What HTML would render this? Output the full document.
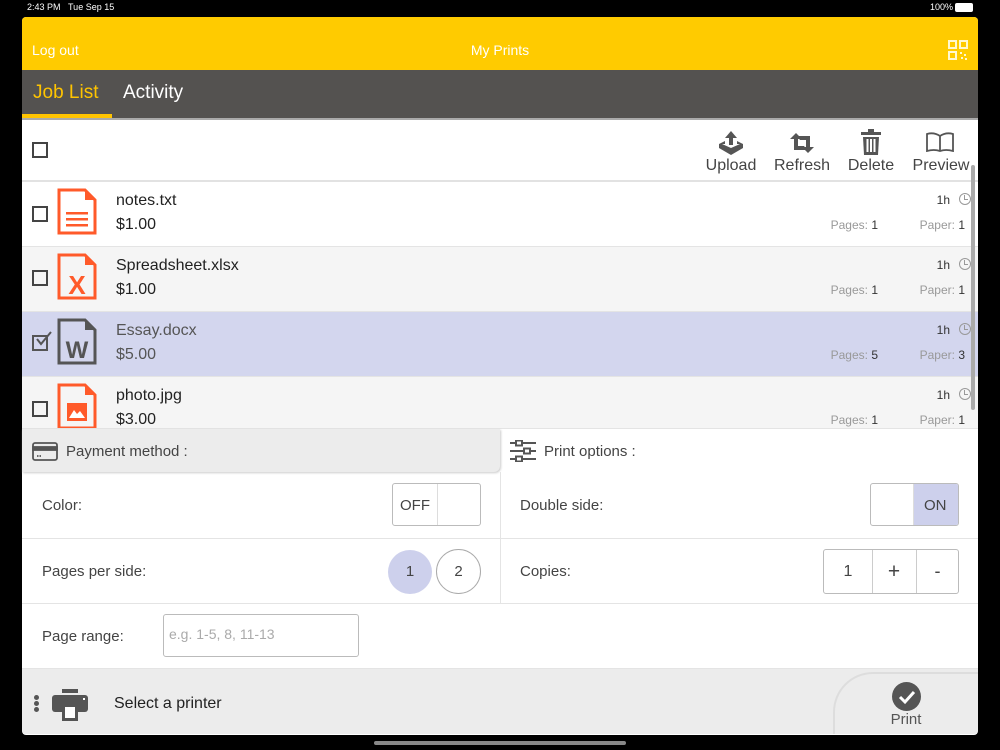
<!DOCTYPE html>
<html><head><meta charset="utf-8"><style>
*{margin:0;padding:0;box-sizing:border-box}
html,body{width:1000px;height:750px;overflow:hidden}
body{background:#000;font-family:"Liberation Sans",Arial,sans-serif;position:relative;color:#333}
.a{position:absolute}
.cb{position:absolute;width:16px;height:16px;border:2px solid #444;background:transparent}
.row{position:absolute;left:22px;width:956px;height:65px;border-bottom:1px solid #e4e4e4}
.fn{position:absolute;left:94px;top:10px;font-size:16px;color:#222}
.pr{position:absolute;left:94px;top:34px;font-size:16px;color:#222}
.tm{position:absolute;right:28px;top:11px;font-size:12px;color:#333}
.clk{position:absolute;right:7px;top:11px;width:12px;height:12px;border:1.3px solid #999;border-radius:50%}
.clk:after{content:"";position:absolute;left:4px;top:1px;width:3px;height:4px;border-left:1.2px solid #999;border-bottom:1.2px solid #999}
.pg{position:absolute;right:100px;top:36px;font-size:12px;color:#999}
.pp{position:absolute;right:13px;top:36px;font-size:12px;color:#999}
.pg b,.pp b{font-weight:normal;color:#333}
.lbl{position:absolute;font-size:15px;color:#444}
.tb{position:absolute;font-size:16px;color:#444;text-align:center}
</style></head><body>
<div class="a" style="left:27px;top:2px;font-size:9px;color:#fff">2:43 PM&nbsp;&nbsp;&nbsp;Tue Sep 15</div>
<div class="a" style="left:930px;top:2px;font-size:9px;color:#fff">100%</div>
<div class="a" style="left:955px;top:3px;width:18px;height:9px;background:#fff;border-radius:2px"></div>

<div class="a" style="left:22px;top:17px;width:956px;height:718px;background:#fff;border-radius:4px;overflow:hidden">
 <div class="a" style="left:0;top:0;width:956px;height:53px;background:#ffcb00"></div>
 <div class="a" style="left:10px;top:25px;font-size:14px;color:#fff">Log out</div>
 <div class="a" style="left:0;width:956px;top:25px;font-size:14px;color:#fff;text-align:center">My Prints</div>
 <svg class="a" style="left:926px;top:23px" width="20" height="20" viewBox="0 0 20 20" fill="none" stroke="#fff8d0" stroke-width="2"><rect x="1" y="1" width="7" height="7"/><rect x="12" y="1" width="7" height="7"/><rect x="1" y="12" width="7" height="7"/><g fill="#fff8d0" stroke="none"><rect x="12" y="12" width="2" height="2"/><rect x="16" y="14" width="2" height="2"/><rect x="13" y="17" width="2" height="2"/><rect x="17" y="18" width="2" height="2"/></g></svg>
 <div class="a" style="left:0;top:53px;width:956px;height:50px;background:#545250"></div>
 <div class="a" style="left:11px;top:65px;font-size:19px;color:#ffc400">Job List</div>
 <div class="a" style="left:101px;top:65px;font-size:19px;color:#fff">Activity</div>
 <div class="a" style="left:0;top:97px;width:90px;height:4px;background:#ffc400"></div>
 <div class="a" style="left:0;top:101px;width:956px;height:2px;background:#aaa"></div>
</div>

<!-- toolbar -->
<div class="cb" style="left:32px;top:142px"></div>
<svg class="a" style="left:716px;top:130px" width="30" height="26" viewBox="0 0 30 26" fill="#555"><path d="M15 1 L21 8 H17 V15 H13 V8 H9Z"/><path d="M3 14 L9 11 V14 H6 L15 18 L24 14 H21 V11 L27 14 V18 L15 25 L3 18Z"/></svg>
<div class="tb" style="left:700px;top:157px;width:62px">Upload</div>
<svg class="a" style="left:789px;top:133px" width="26" height="20" viewBox="0 0 26 20" fill="#555"><path d="M1 6 L7 0 L13 6 H9 V13 H15 L18 17 H5 V6Z"/><path d="M25 14 L19 20 L13 14 H17 V7 H11 L8 3 H21 V14Z"/></svg>
<div class="tb" style="left:770px;top:157px;width:64px">Refresh</div>
<svg class="a" style="left:860px;top:129px" width="22" height="26" viewBox="0 0 22 26" fill="#555"><rect x="1" y="3" width="20" height="3"/><rect x="8" y="0" width="6" height="3"/><path d="M3 8 H19 L18 26 H4Z"/><g fill="#fff"><rect x="6.5" y="10" width="2" height="13"/><rect x="10" y="10" width="2" height="13"/><rect x="13.5" y="10" width="2" height="13"/></g></svg>
<div class="tb" style="left:843px;top:157px;width:56px">Delete</div>
<svg class="a" style="left:926px;top:132px" width="28" height="20" viewBox="0 0 28 20" fill="none" stroke="#555" stroke-width="1.8"><path d="M14 4 Q8 0 1 2 V19 Q8 17 14 19 Q20 17 27 19 V2 Q20 0 14 4 V19"/></svg>
<div class="tb" style="left:910px;top:157px;width:62px">Preview</div>
<div class="a" style="left:22px;top:180px;width:956px;height:2px;background:#e2e2e2"></div>

<!-- rows -->
<div class="row" style="top:182px;background:#fff">
 <div class="cb" style="left:10px;top:24px"></div>
 <svg class="a" style="left:35px;top:6px" width="40" height="47" viewBox="0 0 40 47"><path d="M2 2 H28 L38 12 V45 H2Z" fill="none" stroke="#ff5a2a" stroke-width="3"/><path d="M28 2 V12 H38Z" fill="#ff5a2a"/><g fill="#ff5a2a"><rect x="9" y="24" width="22" height="2.5"/><rect x="9" y="30" width="22" height="2.5"/><rect x="9" y="36" width="22" height="2.5"/></g></svg>
 <div class="fn">notes.txt</div><div class="pr">$1.00</div>
 <div class="tm">1h</div><div class="clk"></div>
 <div class="pg">Pages: <b>1</b></div><div class="pp">Paper: <b>1</b></div>
</div>
<div class="row" style="top:247px;background:#f5f5f5">
 <div class="cb" style="left:10px;top:23px"></div>
 <svg class="a" style="left:35px;top:6px" width="40" height="47" viewBox="0 0 40 47"><path d="M2 2 H28 L38 12 V45 H2Z" fill="none" stroke="#ff5a2a" stroke-width="3"/><path d="M28 2 V12 H38Z" fill="#ff5a2a"/><text x="20" y="41" font-family="Liberation Sans" font-weight="bold" font-size="26" fill="#ff5a2a" text-anchor="middle">X</text></svg>
 <div class="fn">Spreadsheet.xlsx</div><div class="pr">$1.00</div>
 <div class="tm">1h</div><div class="clk"></div>
 <div class="pg">Pages: <b>1</b></div><div class="pp">Paper: <b>1</b></div>
</div>
<div class="row" style="top:312px;background:#d3d6ee">
 <div class="a" style="left:10px;top:23px;width:16px;height:16px;border:2px solid #555"></div>
 <svg class="a" style="left:11px;top:18px" width="20" height="18"><path d="M4 9 L8 14 L18 2" fill="none" stroke="#555" stroke-width="2"/></svg>
 <svg class="a" style="left:35px;top:6px" width="40" height="47" viewBox="0 0 40 47"><path d="M2 2 H28 L38 12 V45 H2Z" fill="none" stroke="#555" stroke-width="3"/><path d="M28 2 V12 H38Z" fill="#555"/><text x="20" y="40" font-family="Liberation Sans" font-weight="bold" font-size="24" fill="#555" text-anchor="middle">W</text></svg>
 <div class="fn" style="color:#555">Essay.docx</div><div class="pr" style="color:#555">$5.00</div>
 <div class="tm">1h</div><div class="clk"></div>
 <div class="pg">Pages: <b>5</b></div><div class="pp">Paper: <b>3</b></div>
</div>
<div class="row" style="top:377px;height:52px;background:#f5f5f5;overflow:hidden">
 <div class="cb" style="left:10px;top:24px"></div>
 <svg class="a" style="left:35px;top:6px" width="40" height="47" viewBox="0 0 40 47"><path d="M2 2 H28 L38 12 V45 H2Z" fill="none" stroke="#ff5a2a" stroke-width="3"/><path d="M28 2 V12 H38Z" fill="#ff5a2a"/><rect x="10" y="20" width="20" height="18" fill="#ff5a2a"/><path d="M12 35 L17 27 L20 31 L23 28 L28 35Z" fill="#fff"/></svg>
 <div class="fn">photo.jpg</div><div class="pr">$3.00</div>
 <div class="tm">1h</div><div class="clk"></div>
 <div class="pg">Pages: <b>1</b></div><div class="pp">Paper: <b>1</b></div>
</div>
<div class="a" style="left:971px;top:165px;width:4px;height:245px;background:#aaa;border-radius:2px"></div>

<!-- options -->
<div class="a" style="left:22px;top:429px;width:478px;height:43px;background:#ececec;border-radius:0 0 6px 0;box-shadow:1px 1px 2px #ccc"></div>
<svg class="a" style="left:32px;top:442px" width="26" height="19" viewBox="0 0 26 19" fill="none" stroke="#555" stroke-width="1.8"><rect x="1" y="1" width="24" height="17" rx="2"/><rect x="1" y="5" width="24" height="3" fill="#555"/><path d="M5 14 H10" stroke-dasharray="1.5 1"/></svg>
<div class="lbl" style="left:66px;top:443px">Payment method :</div>
<svg class="a" style="left:509px;top:440px" width="28" height="22" viewBox="0 0 28 22" fill="none" stroke="#555" stroke-width="2"><path d="M1 3 H27 M1 11 H27 M1 19 H27"/><rect x="7" y="0.5" width="6" height="5" fill="#fff"/><rect x="15" y="8.5" width="6" height="5" fill="#fff"/><rect x="7" y="16.5" width="6" height="5" fill="#fff"/></svg>
<div class="lbl" style="left:544px;top:443px">Print options :</div>
<div class="a" style="left:500px;top:472px;width:1px;height:131px;background:#e4e4e4"></div>
<div class="a" style="left:22px;top:538px;width:956px;height:1px;background:#e4e4e4"></div>
<div class="a" style="left:22px;top:603px;width:956px;height:1px;background:#e4e4e4"></div>

<div class="lbl" style="left:42px;top:497px">Color:</div>
<div class="a" style="left:392px;top:483px;width:89px;height:43px;border:1px solid #bbb;border-radius:3px"><div class="a" style="left:44px;top:0;width:1px;height:41px;background:#ddd"></div><div class="a" style="left:7px;top:13px;font-size:15px;color:#444">OFF</div></div>
<div class="lbl" style="left:520px;top:497px">Double side:</div>
<div class="a" style="left:870px;top:483px;width:89px;height:43px;border:1px solid #bbb;border-radius:3px;overflow:hidden"><div class="a" style="left:42px;top:0;width:46px;height:41px;background:#cdd0ec;border-left:1px solid #ddd"></div><div class="a" style="left:53px;top:13px;font-size:15px;color:#444">ON</div></div>

<div class="lbl" style="left:42px;top:563px">Pages per side:</div>
<div class="a" style="left:388px;top:550px;width:44px;height:44px;border-radius:50%;background:#cdd0ec;text-align:center;line-height:44px;font-size:15px;color:#444">1</div>
<div class="a" style="left:436px;top:549px;width:45px;height:45px;border-radius:50%;border:1px solid #aaa;text-align:center;line-height:43px;font-size:15px;color:#444">2</div>
<div class="lbl" style="left:520px;top:563px">Copies:</div>
<div class="a" style="left:823px;top:549px;width:136px;height:45px;border:1px solid #bbb;border-radius:3px;font-size:16px;color:#444">
 <div class="a" style="left:0;width:48px;top:13px;text-align:center">1</div>
 <div class="a" style="left:48px;top:0;width:1px;height:43px;background:#ccc"></div>
 <div class="a" style="left:48px;width:44px;top:10px;text-align:center;font-size:21px">+</div>
 <div class="a" style="left:92px;top:0;width:1px;height:43px;background:#ccc"></div>
 <div class="a" style="left:92px;width:43px;top:11px;text-align:center;font-size:18px">-</div>
</div>

<div class="lbl" style="left:42px;top:628px">Page range:</div>
<div class="a" style="left:163px;top:614px;width:196px;height:43px;border:1px solid #bbb;border-radius:3px;font-size:14px;color:#aaa;padding:11px 0 0 5px">e.g. 1-5, 8, 11-13</div>
<div class="a" style="left:22px;top:668px;width:956px;height:1px;background:#e4e4e4"></div>

<!-- bottom bar -->
<div class="a" style="left:22px;top:669px;width:956px;height:65px;background:#ececec;border-radius:0 0 4px 4px;overflow:hidden">
 <div class="a" style="left:811px;top:3px;width:160px;height:90px;border-left:2px solid #ddd;border-top:2px solid #ddd;border-radius:40px 0 0 0"></div>
</div>
<div class="a" style="left:34px;top:695px;width:5px;height:5px;border-radius:50%;background:#555;box-shadow:0 6px 0 #555,0 12px 0 #555"></div>
<svg class="a" style="left:52px;top:689px" width="36" height="32" viewBox="0 0 36 32" fill="#555"><rect x="10" y="0" width="16" height="4"/><rect x="0" y="6" width="36" height="17" rx="3"/><rect x="10" y="16" width="16" height="16" fill="#555"/><rect x="13" y="18" width="10" height="11" fill="#fff"/><rect x="31" y="9" width="2" height="2" fill="#fff"/></svg>
<div class="a" style="left:114px;top:695px;font-size:16px;color:#222">Select a printer</div>
<div class="a" style="left:892px;top:682px;width:29px;height:29px;border-radius:50%;background:#555"></div>
<svg class="a" style="left:892px;top:682px" width="29" height="29"><path d="M8 15 L13 20 L22 10" fill="none" stroke="#fff" stroke-width="3"/></svg>
<div class="a" style="left:880px;top:711px;width:52px;text-align:center;font-size:15px;color:#555">Print</div>
<div class="a" style="left:374px;top:741px;width:252px;height:4px;border-radius:2px;background:#888"></div>
</body></html>
